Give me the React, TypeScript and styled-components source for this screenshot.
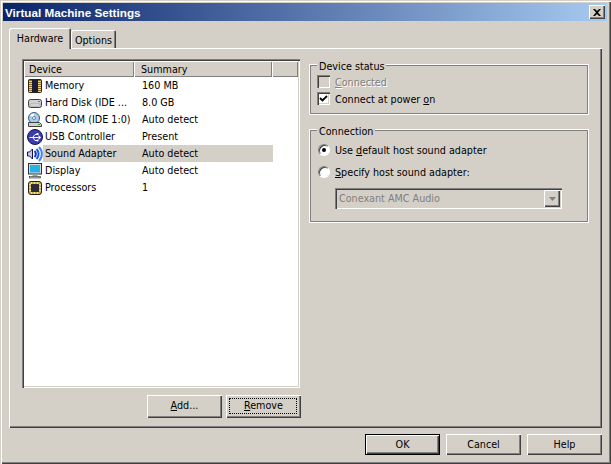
import React from 'react';
import styled, { createGlobalStyle, css } from 'styled-components';

const GlobalStyle = createGlobalStyle`
    html, body {
        margin: 0;
        padding: 0;
        background: #d4d0c8;
    }
    * {
        box-sizing: border-box;
    }
`;

const Window = styled.div`
    width: 611px;
    height: 464px;
    padding: 3px 4px 2px 3px;
    display: flex;
    flex-direction: column;
    background: #d4d0c8;
    color: #000;
    font-family: "DejaVu Sans Condensed", "DejaVu Sans", sans-serif;
    font-stretch: condensed;
    font-size: 10.7px;
    box-shadow: inset 1px 1px 0 #d4d0c8, inset 2px 2px 0 #fff, inset -1px -1px 0 #404040, inset -2px -2px 0 #808080;
`;

const TitleBar = styled.div`
    height: 18px;
    flex: none;
    display: flex;
    align-items: center;
    justify-content: space-between;
    padding: 0 2px 0 2px;
    background: linear-gradient(to right, #0a246a, #a6caf0);
    color: #fff;
    font-family: "Liberation Sans", Arial, sans-serif;
    font-weight: bold;
    font-size: 11.7px;
`;

const CloseButton = styled.div`
    width: 16px;
    height: 14px;
    display: flex;
    align-items: center;
    justify-content: center;
    background: #d4d0c8;
    box-shadow: inset 1px 1px 0 #fff, inset -1px -1px 0 #404040, inset -2px -2px 0 #808080;
`;

const Body = styled.div`
    flex: 1;
    display: flex;
    flex-direction: column;
    padding: 7px 5px 0 6px;
`;

const TabRow = styled.div`
    height: 20px;
    display: flex;
    align-items: flex-end;
`;

const Tab = styled.div<{ $active?: boolean }>`
    display: flex;
    align-items: center;
    justify-content: center;
    border-radius: 2px 2px 0 0;
    background: #d4d0c8;
    box-shadow: inset 1px 1px 0 #fff, inset -1px 0 0 #404040, inset -2px 0 0 #808080;
    ${props => props.$active ? css`
        width: 62px;
        height: 21px;
        margin-bottom: -1px;
        padding-bottom: 1px;
        position: relative;
        z-index: 1;
    ` : css`
        width: 45px;
        height: 18px;
        padding-top: 2px;
    `}
`;

const Panel = styled.div`
    width: 593px;
    height: 380px;
    display: flex;
    gap: 8px;
    padding: 11px 12px 0 13px;
    background: #d4d0c8;
    box-shadow: inset 1px 1px 0 #fff, inset -1px -1px 0 #404040, inset -2px -2px 0 #808080;
`;

const LeftColumn = styled.div`
    width: 279px;
    flex: none;
    display: flex;
    flex-direction: column;
    gap: 7px;
`;

const List = styled.div`
    width: 278px;
    height: 329px;
    background: #fff;
    padding: 2px;
    box-shadow: inset 1px 1px 0 #808080, inset 2px 2px 0 #404040, inset -1px -1px 0 #fff, inset -2px -2px 0 #d4d0c8;
`;

const ListHeader = styled.div`
    height: 16px;
    display: flex;
    background: #d4d0c8;
`;

const HeaderCell = styled.div<{ $w: number; $pad?: number }>`
    width: ${props => props.$w}px;
    padding: 0 0 0 ${props => props.$pad ?? 5}px;
    display: flex;
    align-items: center;
    box-shadow: inset 1px 1px 0 #fff, inset -1px -1px 0 #808080;
`;

const Row = styled.div`
    height: 17px;
    display: flex;
    align-items: center;
`;

const IconSlot = styled.div`
    width: 19px;
    height: 17px;
    flex: none;
    display: flex;
    align-items: center;
    justify-content: center;
    padding-left: 3px;
`;

const RowBody = styled.div<{ $selected?: boolean }>`
    width: 230px;
    height: 17px;
    display: flex;
    align-items: center;
    background: ${props => props.$selected ? '#d4d0c8' : 'transparent'};
`;

const DeviceName = styled.div`
    width: 99px;
    padding-left: 2px;
    white-space: nowrap;
    overflow: hidden;
`;

const ButtonRow = styled.div`
    display: flex;
    justify-content: flex-end;
    gap: 4px;
`;

const Button = styled.div<{ $default?: boolean; $focused?: boolean; $short?: boolean }>`
    width: 75px;
    height: ${props => props.$short ? 21 : 23}px;
    padding-bottom: ${props => props.$short ? 0 : 2}px;
    display: flex;
    align-items: center;
    justify-content: center;
    position: relative;
    background: #d4d0c8;
    box-shadow: inset 1px 1px 0 #fff, inset -1px -1px 0 #404040, inset -2px -2px 0 #808080;
    ${props => props.$default && css`
        box-shadow: inset 0 0 0 1px #000, inset 2px 2px 0 #fff, inset -2px -2px 0 #404040, inset -3px -3px 0 #808080;
    `}
    ${props => props.$focused && css`
        &::after {
            content: '';
            position: absolute;
            inset: 3px 4px 4px 3px;
            border: 1px dotted #000;
        }
    `}
`;

const RightColumn = styled.div`
    width: 280px;
    flex: none;
    display: flex;
    flex-direction: column;
    gap: 14px;
    padding-top: 5px;
`;

const Group = styled.div<{ $h: number }>`
    height: ${props => props.$h}px;
    position: relative;
    border: 1px solid #fff;
    outline: 1px solid #808080;
    outline-offset: -2px;
    display: flex;
    flex-direction: column;
`;

const Legend = styled.div`
    position: absolute;
    top: -5px;
    left: 7px;
    padding: 0 2px;
    background: #d4d0c8;
    line-height: 13px;
`;

const Label = styled.span`
    padding-top: 1px;
`;

const CheckRow = styled.div<{ $disabled?: boolean }>`
    height: 17px;
    display: flex;
    align-items: center;
    gap: 5px;
    color: ${props => props.$disabled ? '#808080' : '#000'};
    text-shadow: ${props => props.$disabled ? '1px 1px 0 #fff' : 'none'};
`;

const CheckBox = styled.div<{ $disabled?: boolean }>`
    width: 13px;
    height: 13px;
    flex: none;
    display: flex;
    align-items: center;
    justify-content: center;
    background: ${props => props.$disabled ? '#d4d0c8' : '#fff'};
    box-shadow: inset 1px 1px 0 #808080, inset 2px 2px 0 #404040, inset -1px -1px 0 #fff, inset -2px -2px 0 #d4d0c8;
`;

const CheckList = styled.div`
    display: flex;
    flex-direction: column;
    padding: 8px 0 0 7px;
`;

const RadioList = styled.div`
    display: flex;
    flex-direction: column;
    gap: 6px;
    padding: 12px 0 0 8px;
`;

const RadioRow = styled.div`
    height: 16px;
    display: flex;
    align-items: center;
    gap: 5px;
`;

const Radio = styled.div`
    width: 12px;
    height: 12px;
    flex: none;
    border-radius: 50%;
    background: #fff;
    display: flex;
    align-items: center;
    justify-content: center;
    border: 1px solid;
    border-color: #808080 #fff #fff #808080;
    box-shadow: inset 1px 1px 0 #404040;
`;

const RadioDot = styled.div`
    width: 4px;
    height: 4px;
    border-radius: 50%;
    background: #000;
`;

const Select = styled.div`
    width: 227px;
    height: 21px;
    margin: 8px 0 0 25px;
    padding: 2px 2px 2px 4px;
    display: flex;
    align-items: center;
    justify-content: space-between;
    color: #808080;
    background: #d4d0c8;
    box-shadow: inset 1px 1px 0 #808080, inset 2px 2px 0 #404040, inset -1px -1px 0 #fff, inset -2px -2px 0 #d4d0c8;
`;

const SelectArrow = styled.div`
    width: 16px;
    height: 17px;
    display: flex;
    align-items: center;
    justify-content: center;
    background: #d4d0c8;
    box-shadow: inset 1px 1px 0 #fff, inset -1px -1px 0 #404040, inset -2px -2px 0 #808080;
`;

const Footer = styled.div`
    display: flex;
    justify-content: flex-end;
    gap: 6px;
    padding: 6px 0 0 0;
`;

const U = styled.span`
    text-decoration: underline;
`;

const MemoryIcon = () => (
    <svg width="16" height="16" viewBox="0 0 16 16">
        <rect x="1.500" y="1.500" width="13" height="13" rx="1" fill="#8a6a20" stroke="#2e2410" />
        <rect x="5" y="2" width="6" height="12" fill="#1c1c38" />
        <path d="M2 3.500h3M2 5.500h3M2 7.500h3M2 9.500h3M2 11.500h3M2 13.500h3M11 3.500h3M11 5.500h3M11 7.500h3M11 9.500h3M11 11.500h3M11 13.500h3" stroke="#f6d870" />
    </svg>
);

const DiskIcon = () => (
    <svg width="16" height="16" viewBox="0 0 16 16">
        <rect x="1.500" y="4.500" width="13" height="8" rx="2" fill="#d0d0d0" stroke="#404040" />
        <rect x="3" y="9" width="10" height="2" fill="#f0f0f0" stroke="#808080" strokeWidth="0.500" />
        <rect x="11" y="6" width="2" height="1" fill="#30b030" />
    </svg>
);

const CdIcon = () => (
    <svg width="16" height="16" viewBox="0 0 16 16">
        <circle cx="7" cy="6" r="5.500" fill="#a8cdea" stroke="#3a5a80" />
        <path d="M3 3.500a4.500 4.500 0 0 1 4-2v4.500z" fill="#f4f8ff" />
        <circle cx="7" cy="6" r="1.500" fill="#fff" stroke="#3a5a80" strokeWidth="0.700" />
        <path d="M1.500 10.500h11l2 2v2h-13z" fill="#d0d0d0" stroke="#404040" />
        <rect x="11" y="12" width="2" height="1" fill="#30b030" />
    </svg>
);

const UsbIcon = () => (
    <svg width="16" height="16" viewBox="0 0 16 16">
        <circle cx="8" cy="8" r="7.500" fill="#3c3cb0" stroke="#14144c" />
        <path d="M2.500 8.500h9M5.500 8.500l2.500-3h2M6 8.500l2 3h2" stroke="#fff" fill="none" />
        <path d="M11.500 6l2.500 2.500-2.500 2.500z" fill="#fff" />
        <rect x="9.500" y="4" width="2" height="2" fill="#fff" />
        <circle cx="10.500" cy="11.500" r="1" fill="#fff" />
    </svg>
);

const SoundIcon = () => (
    <svg width="16" height="16" viewBox="0 0 16 16">
        <path d="M0.500 6h2l3-3v10l-3-3h-2z" fill="#c8c8e0" stroke="#101060" />
        <path d="M7.500 5a4 4 0 0 1 0 6" stroke="#0c30c0" strokeWidth="2" fill="none" />
        <path d="M9.500 3a7 7 0 0 1 0 10" stroke="#1858e8" strokeWidth="2" fill="none" />
        <path d="M12 1a10 10 0 0 1 0 14" stroke="#4088f0" strokeWidth="2" fill="none" />
    </svg>
);

const DisplayIcon = () => (
    <svg width="16" height="16" viewBox="0 0 16 16">
        <rect x="1.500" y="0.500" width="13" height="10.500" fill="#d8d8d8" stroke="#303030" />
        <rect x="3" y="2" width="10" height="7.500" fill="#28b0e8" />
        <path d="M6 11.500h4l1 2H5z" fill="#a0a0a0" />
        <rect x="2.500" y="13.500" width="11" height="1.500" fill="#c8c8c8" stroke="#303030" strokeWidth="0.600" />
        <rect x="11" y="13.800" width="2" height="1" fill="#30b030" />
    </svg>
);

const CpuIcon = () => (
    <svg width="16" height="16" viewBox="0 0 16 16">
        <rect x="1.500" y="1.500" width="13" height="13" rx="2.500" fill="#d8b048" stroke="#202020" />
        <rect x="4" y="4" width="8" height="8" fill="#2c2c3a" />
        <path d="M4.500 2v2M7.500 2v2M10.500 2v2M4.500 12v2M7.500 12v2M10.500 12v2M2 4.500h2M2 7.500h2M2 10.500h2M12 4.500h2M12 7.500h2M12 10.500h2" stroke="#f4e090" />
    </svg>
);

const devices = [
    { name: 'Memory', summary: '160 MB', icon: <MemoryIcon /> },
    { name: 'Hard Disk (IDE ...', summary: '8.0 GB', icon: <DiskIcon /> },
    { name: 'CD-ROM (IDE 1:0)', summary: 'Auto detect', icon: <CdIcon /> },
    { name: 'USB Controller', summary: 'Present', icon: <UsbIcon /> },
    { name: 'Sound Adapter', summary: 'Auto detect', icon: <SoundIcon />, selected: true },
    { name: 'Display', summary: 'Auto detect', icon: <DisplayIcon /> },
    { name: 'Processors', summary: '1', icon: <CpuIcon /> },
];

const App: React.FC = () => {
    return (
        <>
            <GlobalStyle />
            <Window>
                <TitleBar>
                    Virtual Machine Settings
                    <CloseButton>
                        <svg width="8" height="7" viewBox="0 0 8 7">
                            <path d="M0 0h2l2 2 2-2h2L5 3.500 8 7H6L4 5 2 7H0l3-3.500z" fill="#000" />
                        </svg>
                    </CloseButton>
                </TitleBar>
                <Body>
                    <TabRow>
                        <Tab $active>Hardware</Tab>
                        <Tab>Options</Tab>
                    </TabRow>
                    <Panel>
                        <LeftColumn>
                            <List>
                                <ListHeader>
                                    <HeaderCell $w={110}>Device</HeaderCell>
                                    <HeaderCell $w={138} $pad={7}>Summary</HeaderCell>
                                    <HeaderCell $w={26} />
                                </ListHeader>
                                {devices.map(device => (
                                    <Row key={device.name}>
                                        <IconSlot>{device.icon}</IconSlot>
                                        <RowBody $selected={device.selected}>
                                            <DeviceName>{device.name}</DeviceName>
                                            <div>{device.summary}</div>
                                        </RowBody>
                                    </Row>
                                ))}
                            </List>
                            <ButtonRow>
                                <Button><span><U>A</U>dd...</span></Button>
                                <Button $focused><span><U>R</U>emove</span></Button>
                            </ButtonRow>
                        </LeftColumn>
                        <RightColumn>
                            <Group $h={51}>
                                <Legend>Device status</Legend>
                                <CheckList>
                                    <CheckRow $disabled>
                                        <CheckBox $disabled />
                                        <Label><U>C</U>onnected</Label>
                                    </CheckRow>
                                    <CheckRow>
                                        <CheckBox>
                                            <svg width="9" height="9" viewBox="0 0 9 9">
                                                <path d="M1 4l2.500 2.500L8 2" stroke="#000" strokeWidth="1.800" fill="none" />
                                            </svg>
                                        </CheckBox>
                                        <Label>Connect at power <U>o</U>n</Label>
                                    </CheckRow>
                                </CheckList>
                            </Group>
                            <Group $h={94}>
                                <Legend>Connection</Legend>
                                <RadioList>
                                    <RadioRow>
                                        <Radio><RadioDot /></Radio>
                                        <Label>Use <U>d</U>efault host sound adapter</Label>
                                    </RadioRow>
                                    <RadioRow>
                                        <Radio />
                                        <Label><U>S</U>pecify host sound adapter:</Label>
                                    </RadioRow>
                                </RadioList>
                                <Select>
                                    Conexant AMC Audio
                                    <SelectArrow>
                                        <svg width="7" height="4" viewBox="0 0 7 4">
                                            <path d="M0 0h7L3.500 4z" fill="#808080" />
                                        </svg>
                                    </SelectArrow>
                                </Select>
                            </Group>
                        </RightColumn>
                    </Panel>
                    <Footer>
                        <Button $default $short>OK</Button>
                        <Button $short>Cancel</Button>
                        <Button $short>Help</Button>
                    </Footer>
                </Body>
            </Window>
        </>
    );
};

export default App;
